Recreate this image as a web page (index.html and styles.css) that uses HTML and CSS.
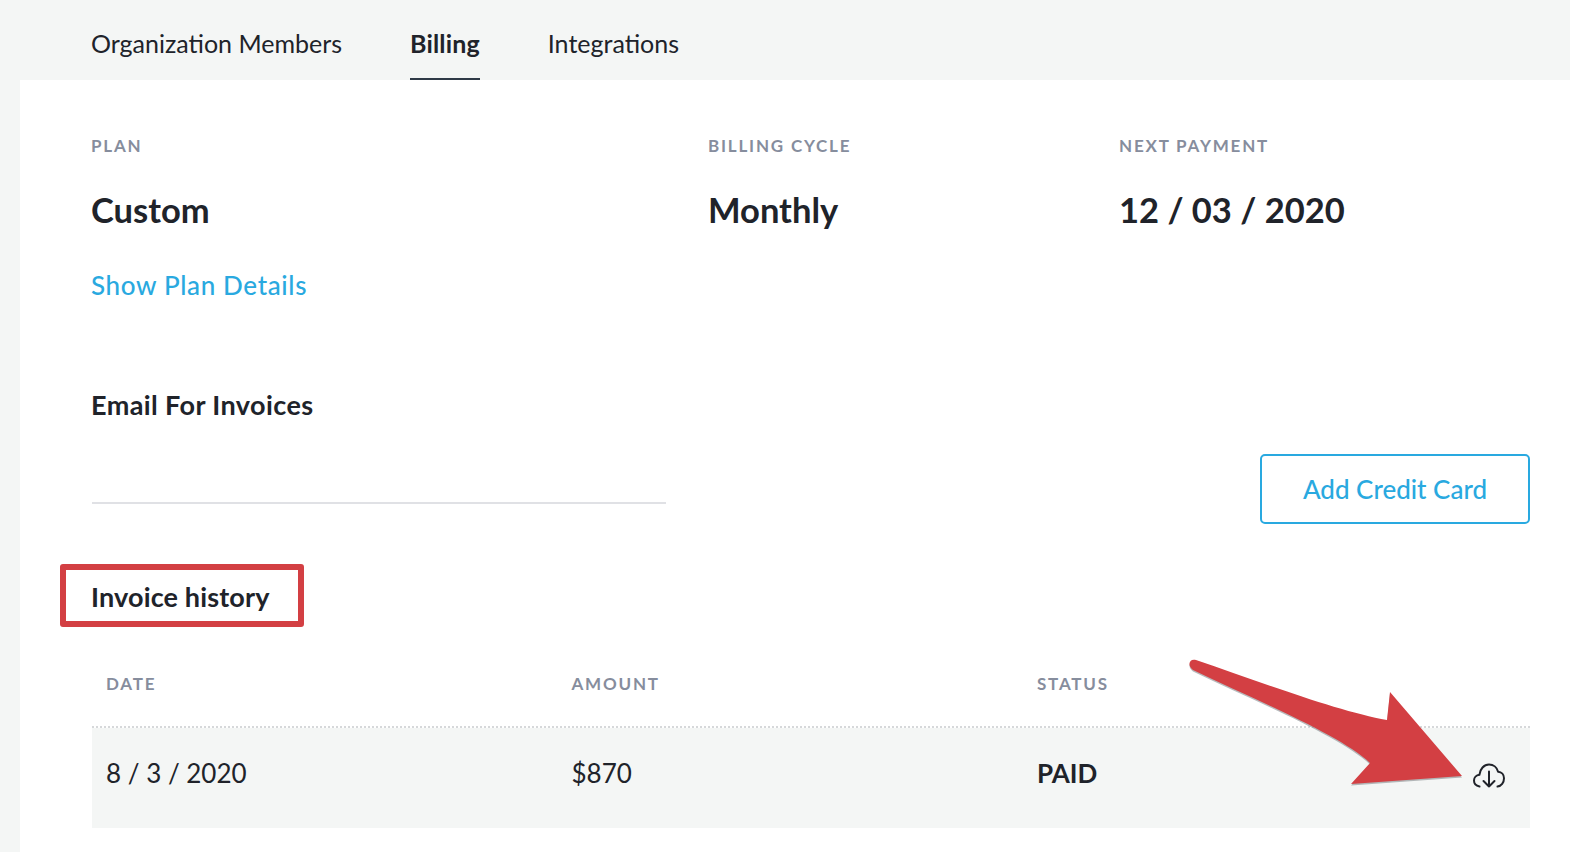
FILE: index.html
```html
<!DOCTYPE html>
<html lang="en">
<head>
<meta charset="utf-8">
<title>Billing</title>
<link rel="stylesheet" href="styles.css">
</head>
<body>
<main class="page">
  <nav class="tabs">
    <a class="tab">Organization Members</a>
    <a class="tab active">Billing</a>
    <a class="tab">Integrations</a>
  </nav>
  <section class="panel">
    <div class="summary">
      <div class="col col-plan">
        <div class="label">PLAN</div>
        <div class="value">Custom</div>
        <a class="link">Show Plan Details</a>
      </div>
      <div class="col col-cycle">
        <div class="label">BILLING CYCLE</div>
        <div class="value">Monthly</div>
      </div>
      <div class="col">
        <div class="label">NEXT PAYMENT</div>
        <div class="value">12 / 03 / 2020</div>
      </div>
    </div>
    <div class="email-row">
      <div class="email">
        <div class="email-title">Email For Invoices</div>
        <div class="email-input"></div>
      </div>
      <button class="btn">Add Credit Card</button>
    </div>
    <h2 class="history">Invoice history</h2>
    <div class="table">
      <div class="row head">
        <div class="label">DATE</div>
        <div class="label">AMOUNT</div>
        <div class="label">STATUS</div>
      </div>
      <div class="row body">
        <div>8 / 3 / 2020</div>
        <div>$870</div>
        <div class="paid">PAID</div>
        <svg class="dl" width="32" height="26" viewBox="0 0 32 26" fill="none" stroke="#20232a" stroke-width="2" stroke-linecap="round" stroke-linejoin="round">
          <path d="M6.5 23.5C3.2 23 1 20.6 1 17.6c0-3 2.3-5.5 5.4-5.8C7 6 11 1.5 16 1.5c4.4 0 8 3 9.1 7.2 3.4.3 5.9 3.1 5.9 6.5 0 4.3-2.7 7.8-6.5 8.3"/>
          <path d="M16 8.5V23.5M10.5 18l5.5 5.500 5.500-5.500"/>
        </svg>
      </div>
    </div>
  </section>
  <div class="note-box"></div>
  <svg class="note-arrow" width="1570" height="852" viewBox="0 0 1570 852">
    <path class="arrow-shadow" d="M1196 660 C1260 682 1340 712 1387 720 L1390 692 L1462 776 L1351 784 L1370 763 C1340 735 1260 702 1193 670 C1187 666 1189 658 1196 660Z"/>
    <path class="arrow-fill" d="M1196 660 C1260 682 1340 712 1387 720 L1390 692 L1462 776 L1351 784 L1370 763 C1340 735 1260 702 1193 670 C1187 666 1189 658 1196 660Z"/>
  </svg>
</main>
</body>
</html>
```
FILE: styles.css
```css
* { box-sizing: border-box; }
html, body { margin: 0; height: 100%; overflow: hidden; }
body { background: #f4f6f5; font-family: "Lato", "Liberation Sans", sans-serif; color: #20232a; }
.page { height: 852px; display: flex; flex-direction: column; padding-left: 20px; }
.tabs { height: 80px; display: flex; gap: 68px; padding-left: 71px; }
.tab { height: 80px; line-height: 87px; font-size: 25px; }
.active { font-weight: 700; letter-spacing: .15px; border-bottom: 2px solid #2f3a47; }
.panel { flex: 1; background: #fff; padding: 56px 40px 0 71px; }
.summary { display: flex; height: 220px; }
.col-plan { width: 617px; }
.col-cycle { width: 411px; }
.label { font-size: 17px; line-height: 20px; font-weight: 700; letter-spacing: 1.8px; color: #868d9d; }
.value { font-size: 34.5px; line-height: 44px; font-weight: 700; margin-top: 32px; }
.link { display: block; margin-top: 36px; font-size: 26px; line-height: 34px; font-weight: 500; letter-spacing: .65px; color: #29a9e0; }
.email-row { display: flex; justify-content: space-between; height: 224px; }
.email-title { font-size: 27px; line-height: 34px; font-weight: 700; letter-spacing: .4px; margin-top: 32px; }
.email-input { width: 574px; margin: 79px 0 0 1px; border-bottom: 2px solid #e0e1e5; height: 3px; }
.btn { width: 270px; height: 70px; margin-top: 98px; background: #fff; border: 2px solid #29a9e0; border-radius: 5px; font: 500 26px "Lato", sans-serif; color: #29a9e0; }
.history { margin: 0; font-size: 27px; line-height: 34px; font-weight: 700; letter-spacing: .15px; }
.table { margin: 51px 0 0 1px; }
.row { display: grid; grid-template-columns: 465.5px 465.5px 1fr 32px; padding: 0 25px 0 14px; align-items: center; }
.head { height: 63px; padding-bottom: 24px; border-bottom: 2px dotted #d6d8da; }
.body { height: 100px; padding-bottom: 10px; background: #f4f6f5; font-size: 26px; }
.paid { font-weight: 700; }
.dl { display: block; margin-top: 6px; }
.note-box { position: absolute; left: 60px; top: 564px; width: 244px; height: 63px; border: 6px solid #d33f43; border-radius: 3px; }
.note-arrow { position: absolute; left: 0; top: 0; }
.arrow-fill { fill: #d33f43; }
.arrow-shadow { fill: #70757a; opacity: .5; transform: translate(0, 1.5px); }
```
